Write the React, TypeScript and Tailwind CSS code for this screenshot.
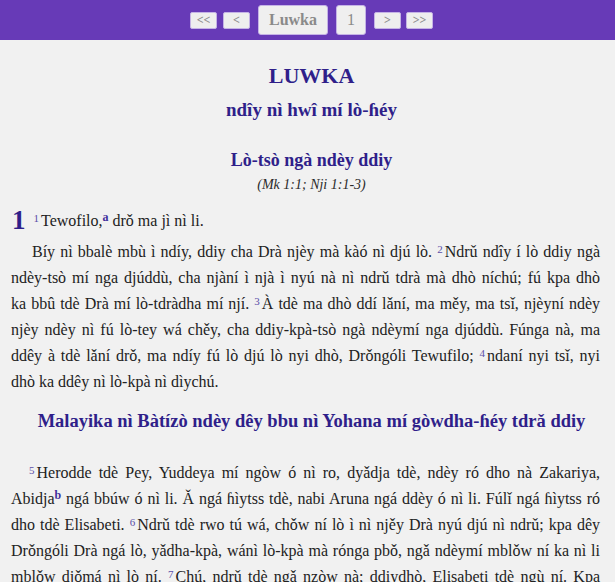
import React from "react";

const V = ({ n }: { n: string }) => (
  <sup className="text-[11px] text-[#5b4ea8] mr-[2px] top-[-4px]">{n}</sup>
);

const F = ({ n }: { n: string }) => (
  <sup className="text-[12px] font-bold text-[#3f2f9c] top-[-5px]">{n}</sup>
);

function SmallButton({ label }: { label: string }) {
  return (
    <button className="h-[17px] w-[27px] bg-[#eeeeee] border border-[#c5b3e6] rounded-[2px] text-[12px] font-bold text-[#8a8a8a] leading-none flex items-center justify-center">
      {label}
    </button>
  );
}

export default function App() {
  return (
    <div className="min-h-screen bg-[#f1f1f1] font-['Liberation_Serif',serif] text-[#222]">
      <nav className="h-[40px] bg-[#673ab7] flex items-center justify-center">
        <div className="flex items-center pl-[8px]">
          <SmallButton label="<<" />
          <div className="w-[6px]" />
          <SmallButton label="<" />
          <div className="w-[8px]" />
          <button className="h-[30px] w-[70px] bg-[#efefef] border border-[#c5b3e6] rounded-[3px] text-[16px] font-bold text-[#8a8a8a]">
            Luwka
          </button>
          <div className="w-[8px]" />
          <button className="h-[30px] w-[30px] bg-[#efefef] border border-[#c5b3e6] rounded-[3px] text-[16px] text-[#8a8a8a]">
            1
          </button>
          <div className="w-[8px]" />
          <SmallButton label=">" />
          <div className="w-[5px]" />
          <SmallButton label=">>" />
        </div>
      </nav>

      <main className="pl-[11px] pr-[15px] pt-[22px]">
        <h1 className="pl-[12px] text-center text-[22px] font-bold text-[#2f1f8a] leading-[28px]">
          LUWKA
        </h1>
        <h2 className="pl-[12px] text-center text-[19px] font-bold text-[#2f1f8a] leading-[24px] mt-[8px]">
          ndîy nì hwî mí lò-ɦéy
        </h2>

        <h3 className="pl-[12px] text-center text-[18px] font-bold text-[#2f1f8a] leading-[24px] mt-[26px]">
          Lò-tsò ngà ndèy ddiy
        </h3>
        <p className="pl-[12px] text-center text-[14px] italic leading-[18px] mt-[4px] text-[#2a2a2a]">
          (Mk 1:1; Nji 1:1-3)
        </p>

        <p className="text-[16px] leading-[26px] mt-[13px]">
          <span className="text-[27px] font-bold text-[#2f1f8a] ml-[1px] mr-[8px] leading-none align-[-3px]">1</span>
          <V n="1" />
          Tewofilo,<F n="a" /> drǒ ma jì nì li.
        </p>

        <p className="text-[16px] leading-[26px] text-justify indent-[21px] mt-[5px]">
          Bíy nì bbalè mbù ì ndíy, ddiy cha Drà njèy mà kàó nì djú lò. <V n="2" />
          Ndrǔ ndîy í lò ddiy ngà ndèy-tsò mí nga djúddù, cha njàní ì njà ì nyú nà nì ndrǔ
          tdrà mà dhò níchú; fú kpa dhò ka{"\u00a0"}bbû tdè Drà mí lò-tdràdha mí njí. <V n="3" />
          À tdè ma dhò ddí lǎní, ma měy, ma tsǐ, njèyní ndèy njèy ndèy nì fú lò-tey wá chěy,
          cha ddiy-kpà-tsò ngà ndèymí nga djúddù. Fúnga nà, ma ddêy à tdè lǎní drǒ, ma ndíy fú
          lò djú lò nyi dhò, Drǒngóli Tewufilo; <V n="4" />
          ndaní nyi tsǐ, nyi dhò{"\u00a0"}ka ddêy nì lò-kpà nì dìychú.
        </p>

        <h3 className="pl-[12px] text-center text-[18.5px] font-bold text-[#2f1f8a] leading-[24px] mt-[14px]">
          Malayika nì Bàtízò ndèy dêy bbu nì Yohana mí gòwdha-ɦéy tdrǎ ddiy
        </h3>

        <p className="text-[16px] leading-[26px] text-justify indent-[18px] mt-[27px]">
          <V n="5" />
          Herodde tdè Pey, Yuddeya mí ngòw ó nì ro, dyǎdja tdè, ndèy ró dho nà Zakariya,
          Abidja<F n="b" /> ngá bbúw ó nì li. Ǎ ngá ɦìytss tdè, nabi Aruna ngá ddèy ó nì li.
          Fúlǐ ngá ɦìytss ró dho tdè Elisabeti. <V n="6" />
          Ndrǔ tdè rwo tú wá, chǒw ní lò ì nì njěy Drà nyú djú nì ndrǔ; kpa dêy Drǒngóli Drà
          ngá lò, yǎdha-kpà, wánì lò-kpà mà rónga pbǒ, ngǎ ndèymí mblǒw ní ka nì li mblǒw
          djǒmá nì lò ní. <V n="7" />
          Chú, ndrǔ tdè ngǎ nzòw nà; ddiydhò, Elisabeti tdè ngù ní. Kpa Elisabeti ngá nzòw
          nì mà, ndrǔ ngá fú tdè lò-tey.
        </p>
      </main>
    </div>
  );
}
